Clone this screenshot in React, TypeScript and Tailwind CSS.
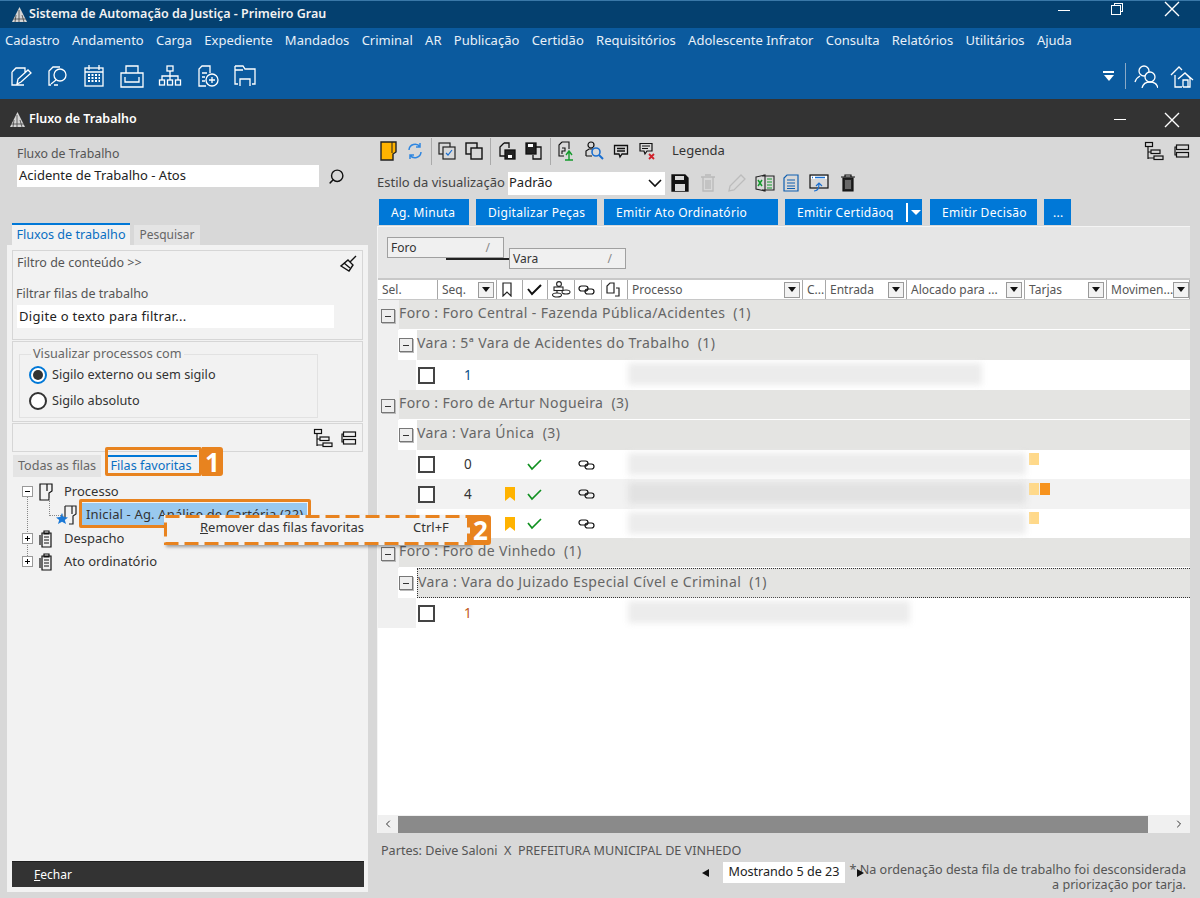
import React from 'react'
import { ChevronLeft, ChevronRight, Search } from 'lucide-react'

const FONT = "font-['Noto_Sans','Open_Sans',sans-serif]"

const menus = ['Cadastro', 'Andamento', 'Carga', 'Expediente', 'Mandados', 'Criminal', 'AR', 'Publicação', 'Certidão', 'Requisitórios', 'Adolescente Infrator', 'Consulta', 'Relatórios', 'Utilitários', 'Ajuda']

const Ico: React.FC<{ w?: number; h?: number; c?: string; sw?: number; children: React.ReactNode }> = ({ w = 24, h = 24, c = 'currentColor', sw = 1.3, children }) => (
  <svg width={w} height={h} viewBox={`0 0 ${w} ${h}`} fill="none" stroke={c} strokeWidth={sw} className="shrink-0">
    {children}
  </svg>
)

const Logo = () => (
  <svg width="17" height="17" viewBox="0 0 17 17" className="shrink-0">
    <path d="M8.5 1 L16 16 H1 Z" fill="#d5d5d5" />
    <path d="M8 4 L8 16 M5 9 L4 16 M11 9 L13 16 M2 13 H15" stroke="#444" strokeWidth="0.8" />
  </svg>
)

const CloseX = () => (
  <svg width="16" height="16" viewBox="0 0 16 16" className="shrink-0">
    <path d="M1 1 L15 15 M15 1 L1 15" stroke="#fff" strokeWidth="1.4" />
  </svg>
)

const TopIcons = () => (
  <div className="flex items-center text-white">
    <div className="ml-[8px] w-[24px]">
      <Ico><path d="M4 8 L8 4 H17 V9 M4 8 V21 H16 M9 20 L10 15 L20 6 L23 9 L13 18 Z" /></Ico>
    </div>
    <div className="ml-[14px] w-[24px]">
      <Ico><path d="M5 21 H3 V7 L7 3 H14 M12 21 H8" /><circle cx="14" cy="11" r="6" /><path d="M10 16 L5 20" /></Ico>
    </div>
    <div className="ml-[13px] w-[22px]">
      <Ico w={22}><rect x="2" y="4" width="18" height="18" /><path d="M6 1 V6 M16 1 V6 M2 8 H20" /><path d="M5 11 H17 M5 14 H17 M5 17 H17" strokeDasharray="2 1.5" strokeWidth="2" /></Ico>
    </div>
    <div className="ml-[14px] w-[26px]">
      <Ico w={26}><path d="M7 9 V2 H19 V9 M2 9 H24 V23 H2 Z M6 13 V18 H20 V13" /></Ico>
    </div>
    <div className="ml-[13px] w-[24px]">
      <Ico><rect x="9" y="2" width="6" height="5" /><path d="M12 7 V12 M4 16 V12 H20 V16 M12 12 V16" /><rect x="1.5" y="16" width="5" height="5" /><rect x="9.5" y="16" width="5" height="5" /><rect x="17.5" y="16" width="5" height="5" /></Ico>
    </div>
    <div className="ml-[14px] w-[24px]">
      <Ico><path d="M10 22 H3 V5 L6 2 H14 V9 M6 9 H11 M6 13 H9 M6 17 H9" /><circle cx="16" cy="16" r="6" /><path d="M16 13 V19 M13 16 H19" /></Ico>
    </div>
    <div className="ml-[13px] w-[24px]">
      <Ico><path d="M2 2 H10 L12 5 H22 V20 H19 M2 2 V20 H5 M2 6 H10 M7 22 V15 H17 V22" /></Ico>
    </div>
  </div>
)

const TreeIcon = () => (
  <Ico w={20} h={20} c="#111" sw={1.2}>
    <rect x="1.5" y="1.5" width="7" height="4" /><rect x="7" y="9" width="9" height="3.5" /><rect x="10" y="15" width="9" height="3.5" />
    <path d="M4 5.5 V18 M4 11 H7 M4 17 H10" />
  </Ico>
)
const ListIcon = () => (
  <Ico w={16} h={16} c="#111" sw={1.2}>
    <rect x="2.5" y="2" width="12" height="4.5" /><rect x="2.5" y="9.5" width="12" height="4.5" /><path d="M2.5 4 H1 V12 H2.5" />
  </Ico>
)

const Sep = () => <div className="w-px h-[27px] bg-[#aaaaaa]" />

const ActionToolbar = () => (
  <div className="h-[28px] flex items-center shrink-0">
    <svg width="17" height="20" viewBox="0 0 17 20" className="ml-[2px] shrink-0"><path d="M1 1 H16 V11 L13 13 V19 H1 Z" fill="#ffb300" stroke="#222" strokeWidth="1.4" /><path d="M12 1 V12" stroke="#222" /></svg>
    <div className="ml-[9px]"><Ico w={18} h={18} c="#2f86e0" sw={1.5}><path d="M3 8 A6 6 0 0 1 14 5 M15 10 A6 6 0 0 1 4 13 M14 1 V5 H10 M4 17 V13 H8" /></Ico></div>
    <div className="ml-[7px]"><Sep /></div>
    <div className="ml-[6px]"><Ico w={18} h={18} c="#222" sw={1.2}><rect x="1" y="1" width="11" height="11" /><rect x="5" y="5" width="12" height="12" fill="#d8d8d8" /><path d="M8 11 L10 13 L14 8" stroke="#1a6fd0" /></Ico></div>
    <div className="ml-[9px]"><Ico w={18} h={18} c="#111" sw={1.4}><rect x="1" y="1" width="11" height="11" /><rect x="6" y="6" width="11" height="11" fill="#d8d8d8" /></Ico></div>
    <div className="ml-[7px]"><Sep /></div>
    <div className="ml-[7px]"><Ico w={18} h={18} c="#111" sw={1.3}><path d="M6 1 H11 V6 M6 1 L2 5 V14 H7" /><rect x="7" y="8" width="10" height="9" fill="#222" /><rect x="10" y="13" width="4" height="3" fill="#fff" stroke="none" /></Ico></div>
    <div className="ml-[9px]"><Ico w={18} h={18} c="#111" sw={1.3}><path d="M11 5 H16 V17 H8 V13" /><rect x="1" y="1" width="10" height="11" fill="#222" /><rect x="3" y="2" width="5" height="3" fill="#fff" stroke="none" /></Ico></div>
    <div className="ml-[7px]"><Sep /></div>
    <div className="ml-[6px]"><Ico w={18} h={20} c="#111" sw={1.1}><path d="M5 1 H12 V8 M5 1 L2 4 V15 H7" /><path d="M5 7 H8 V10 H5 V13" /><path d="M12 19 V11 M9 14 L12 10 L15 14 M8 19 H16" stroke="#149a2c" strokeWidth="1.4" /></Ico></div>
    <div className="ml-[9px]"><Ico w={20} h={20} c="#111" sw={1.2}><circle cx="7" cy="4" r="3" /><path d="M2 15 V10 L5 8 H9 M2 15 H8" /><circle cx="12" cy="11" r="4" stroke="#1a6fd0" strokeWidth="1.6" /><path d="M15 14 L19 18" stroke="#1a6fd0" strokeWidth="2" /></Ico></div>
    <div className="ml-[9px]"><Ico w={16} h={16} c="#111" sw={1.3}><path d="M1.5 2.5 H14.5 V11 H9 L7 14 L6 11 H1.5 Z M4 5.5 H12 M4 8 H12" /></Ico></div>
    <div className="ml-[10px]"><Ico w={16} h={18} c="#111" sw={1.2}><path d="M1 1.5 H13 V9 H8 L6 12 L5 9 H1 Z M3 4 H11 M3 6.5 H9" /><path d="M10 12 L15 17 M15 12 L10 17" stroke="#d0202a" strokeWidth="1.8" /></Ico></div>
    <span className="ml-[17px] text-[13px] text-[#333]">Legenda</span>
    <div className="ml-auto flex items-center gap-[10px]"><TreeIcon /><ListIcon /></div>
  </div>
)

const StyleToolbar = () => (
  <div className="h-[26px] flex items-center mt-[5px] shrink-0 -ml-[1px]">
    <span className="text-[13px] text-[#444] w-[131px] whitespace-nowrap">Estilo da visualização</span>
    <div className="w-[157px] h-[23px] bg-white flex items-center justify-between px-[1px] text-[13px] text-[#222]">
      <span>Padrão</span>
      <Ico w={18} h={18} c="#111" sw={1.6}><path d="M3 6 L9 12 L15 6" /></Ico>
    </div>
    <div className="ml-[6px]"><Ico w={18} h={18} c="#111"><path d="M1 1 H14 L17 4 V17 H1 Z" fill="#111" /><rect x="4" y="2" width="9" height="4" fill="#d8d8d8" stroke="none" /><rect x="4" y="10" width="10" height="7" fill="#d8d8d8" stroke="none" /></Ico></div>
    <div className="ml-[10px]"><Ico w={18} h={18} c="#b9b9b9"><path d="M2 3 H16 M4 3 V17 H14 V3 M6 1 H12 M7 6 V15 M9 6 V15 M11 6 V15" /></Ico></div>
    <div className="ml-[10px]"><Ico w={20} h={20} c="#bcbcbc" sw={1.3}><path d="M2 18 L3 13 L14 2 L18 6 L7 17 Z" /></Ico></div>
    <div className="ml-[8px]"><Ico w={20} h={18} c="#222" sw={1.1}><path d="M7 2 H19 V16 H7 M1 3 L10 1 V17 L1 15 Z" /><path d="M3 6 L7 12 M7 6 L3 12" stroke="#149a2c" strokeWidth="1.5" /><path d="M12 5 H17 M12 8 H17 M12 11 H17 M12 14 H17" stroke="#149a2c" /></Ico></div>
    <div className="ml-[8px]"><Ico w={16} h={18} c="#0f5fb0" sw={1.2}><path d="M4 1 H15 V17 H1 V4 Z M4 6 H12 M4 9 H12 M4 12 H12 M4 14.5 H12" /></Ico></div>
    <div className="ml-[10px]"><Ico w={20} h={18} c="#111" sw={1.2}><rect x="1" y="1" width="18" height="13" /><rect x="2" y="2" width="16" height="3" stroke="none" fill="#fff" /><path d="M3 3.5 H4 M6 3.5 H16" stroke="#1a6fd0" strokeWidth="1.6" /><path d="M5 17 C8 17 10 15 10 10 M7 12 L10 9 L13 12" stroke="#1a6fd0" /></Ico></div>
    <div className="ml-[11px]"><Ico w={16} h={18} c="#111" sw={1.2}><path d="M1 3 H15 M5 3 V1 H11 V3" /><path d="M3 4 H13 V17 H3 Z" fill="#222" /><path d="M6 6 V15 M8 6 V15 M10 6 V15" stroke="#999" /></Ico></div>
  </div>
)

const Btn: React.FC<{ w: string; pad?: string; children: React.ReactNode }> = ({ w, pad = 'pl-[12px]', children }) => (
  <div className={`${w} ${pad} h-[26px] pt-[1px] bg-[#0078d7] text-white text-[12px] tracking-[0.3px] flex items-center whitespace-nowrap`}>{children}</div>
)

const ActionButtons = () => (
  <div className="flex gap-[7px] h-[26px] mt-[3px] ml-[1px] shrink-0">
    <Btn w="w-[90px]">Ag. Minuta</Btn>
    <Btn w="w-[121px]">Digitalizar Peças</Btn>
    <Btn w="w-[174px]">Emitir Ato Ordinatório</Btn>
    <div className="w-[137px] h-[26px] pt-[1px] bg-[#0078d7] text-white text-[12px] tracking-[0.3px] flex items-center">
      <span className="ml-[12px] w-[109px] whitespace-nowrap">Emitir Certidãoq</span>
      <div className="w-[2px] h-[19px] bg-white" />
      <div className="ml-[3px] w-0 h-0 border-x-[5px] border-x-transparent border-t-[5px] border-t-white" />
    </div>
    <div className="ml-[1px]"><Btn w="w-[107px]">Emitir Decisão</Btn></div>
    <Btn w="w-[27px]" pad="pl-[9px]">...</Btn>
  </div>
)

const DropBtn = () => (
  <div className="w-[16px] h-[16px] border border-[#9a9a9a] bg-[#f2f2f2] flex items-center justify-center shrink-0">
    <div className="w-0 h-0 border-x-[4px] border-x-transparent border-t-[5px] border-t-[#111]" />
  </div>
)

const HCell: React.FC<{ w: string; label?: string; drop?: boolean; icon?: React.ReactNode }> = ({ w, label, drop, icon }) => (
  <div className={`${w} h-full flex items-center justify-between ${icon ? 'pl-[3px]' : 'pl-[4px]'} pr-[2px] border-r border-[#a8a8a8] shrink-0 text-[12px] text-[#555] whitespace-nowrap overflow-hidden`}>
    {label && <span>{label}</span>}
    {icon}
    {drop && <DropBtn />}
  </div>
)

const LinkIcon = () => (
  <Ico w={18} h={12} c="#111" sw={1.2}>
    <rect x="1" y="2" width="9" height="5" rx="2.5" /><rect x="7" y="5" width="9" height="5" rx="2.5" />
  </Ico>
)

const HeaderRow = () => (
  <div className="h-[22px] bg-white border-t-[2px] border-b border-[#c8c8c8] flex items-center shrink-0">
    <HCell w="w-[60px]" label="Sel." />
    <HCell w="w-[59px]" label="Seq." drop />
    <HCell w="w-[26px]" icon={<Ico w={14} h={15} c="#222" sw={1.2}><path d="M3 1 H11 V14 L7 10 L3 14 Z" /></Ico>} />
    <HCell w="w-[25px]" icon={<Ico w={17} h={15} c="#111" sw={2}><path d="M2 7 L6 12 L15 3" /></Ico>} />
    <HCell w="w-[27px]" icon={<Ico w={20} h={17} c="#222" sw={1.1}><circle cx="8" cy="3" r="2.4" /><rect x="3" y="6" width="9" height="3.5" /><path d="M6 9.5 V12" /><ellipse cx="6" cy="14" rx="4.5" ry="2" /><ellipse cx="15" cy="11" rx="4" ry="2" /></Ico>} />
    <HCell w="w-[27px]" icon={<LinkIcon />} />
    <HCell w="w-[26px]" icon={<Ico w={16} h={16} c="#222" sw={1.2}><path d="M5 1 H9 V11 H2 V4 Z M11 6 H14 V14 H10" /></Ico>} />
    <HCell w="w-[175px]" label="Processo" drop />
    <HCell w="w-[23px]" label="C..." />
    <HCell w="w-[81px]" label="Entrada" drop />
    <HCell w="w-[118px]" label="Alocado para ..." drop />
    <HCell w="w-[82px]" label="Tarjas" drop />
    <HCell w="w-[83px]" label="Movimen..." drop />
  </div>
)

const Minus = () => (
  <div className="w-[14px] h-[14px] border border-[#777] bg-[#eeeeee] flex items-center justify-center shrink-0 shadow-[1px_1px_0_#bbb]">
    <div className="w-[6px] h-px bg-[#333]" />
  </div>
)

const Foro: React.FC<{ label: string; n: number }> = ({ label, n }) => (
  <div className="h-[30px] flex shrink-0">
    <div className="w-[21px] bg-[#f0f0f0] pt-[9px] pl-[3px]"><Minus /></div>
    <div className="flex-1 bg-[#e4e4e2] text-[14px] text-[#666] tracking-[0.38px] whitespace-pre pt-[2px] border-b border-white">{`${label}  (${n})`}</div>
  </div>
)

const Vara: React.FC<{ label: string; n: number; focus?: boolean }> = ({ label, n, focus }) => (
  <div className="h-[30px] flex shrink-0">
    <div className="w-[20px] bg-[#f0f0f0]" />
    <div className="w-[19px] bg-white pt-[8px] pl-[1px]"><Minus /></div>
    <div className={`flex-1 bg-[#e4e4e2] text-[14px] text-[#666] tracking-[0.42px] whitespace-pre pt-[2px] ${focus ? 'border-y border-l border-dotted border-[#333]' : ''}`}>{`${label}  (${n})`}</div>
  </div>
)

type RowProps = { seq?: number; seqColor?: string; mark?: boolean; done?: boolean; link?: boolean; blur: string; tarjas?: string[]; alt?: boolean; h?: string }

const Row: React.FC<RowProps> = ({ seq, seqColor = 'text-[#333]', mark, done, link, blur, tarjas = [], alt, h = 'h-[30px]' }) => (
  <div className={`${h} flex shrink-0`}>
    <div className="w-[38px] bg-[#f0f0f0] shrink-0" />
    <div className={`flex-1 flex items-center ${alt ? 'bg-[#f2f2f2]' : 'bg-white'}`}>
      <div className="w-[17px] h-[17px] border-[2px] border-[#444] bg-white ml-[2px] shrink-0" />
      <span className={`ml-[29px] w-[10px] text-[13.5px] shrink-0 ${seqColor}`}>{seq}</span>
      <div className="ml-[31px] w-[12px] shrink-0">
        {mark && <svg width="10" height="14" viewBox="0 0 10 14"><path d="M0 0 H10 V14 L5 10 L0 14 Z" fill="#ffb300" /></svg>}
      </div>
      <div className="ml-[9px] w-[18px] shrink-0">
        {done && <Ico w={17} h={13} c="#109020" sw={1.7}><path d="M2 6 L6 11 L15 2" /></Ico>}
      </div>
      <div className="ml-[34px] w-[18px] shrink-0">{link && <LinkIcon />}</div>
      <div className="ml-[32px] w-[398px] h-[24px] shrink-0">
        <div className={`${blur} h-[22px] ${alt ? 'bg-[#e2e2e2]' : 'bg-[#ececec]'} blur-[3px]`} />
      </div>
      <div className="ml-[3px] flex gap-[1px] -mt-[11px]">
        {tarjas.map((t, i) => (
          <div key={i} className={`w-[10px] h-[12px] ${t}`} />
        ))}
      </div>
    </div>
  </div>
)

const Grid = () => (
  <div className="flex-1 min-h-0 flex flex-col bg-white border-t border-l border-[#f4f4f4] w-[813px] ml-[-1px] mt-[1px]">
    <div className="h-[51px] bg-[#e6e6e6] flex relative shrink-0">
      <div className="ml-[9px] mt-[10px] w-[117px] h-[21px] border border-[#a0a0a0] bg-[#f0f0f0] text-[12px] text-[#333] flex items-center justify-between px-[3px] z-10">
        <span>Foro</span><span className="text-[#888] mr-[10px]">/</span>
      </div>
      <div className="absolute left-[68px] top-[31px] w-[64px] h-[2px] bg-[#222]" />
      <div className="ml-[5px] mt-[21px] w-[117px] h-[21px] border border-[#a0a0a0] bg-[#f0f0f0] text-[12px] text-[#333] flex items-center justify-between px-[3px] z-10">
        <span>Vara</span><span className="text-[#888] mr-[10px]">/</span>
      </div>
    </div>
    <HeaderRow />
    <Foro label="Foro : Foro Central - Fazenda Pública/Acidentes" n={1} />
    <Vara label="Vara : 5ª Vara de Acidentes do Trabalho" n={1} />
    <Row seq={1} seqColor="text-[#0b4f8a]" blur="w-[354px]" />
    <Foro label="Foro : Foro de Artur Nogueira" n={3} />
    <Vara label="Vara : Vara Única" n={3} />
    <Row seq={0} h="h-[29px]" done link blur="w-[398px]" tarjas={['bg-[#ffd98a]']} />
    <Row seq={4} mark done link alt blur="w-[398px]" tarjas={['bg-[#ffd98a]', 'bg-[#f7931e]']} />
    <Row h="h-[29px]" mark done link blur="w-[398px]" tarjas={['bg-[#ffd98a]']} />
    <Foro label="Foro : Foro de Vinhedo" n={1} />
    <Vara focus label="Vara : Vara do Juizado Especial Cível e Criminal" n={1} />
    <Row seq={1} seqColor="text-[#c2571a]" blur="w-[282px]" />
    <div className="flex-1" />
    <div className="h-[18px] bg-[#f0f0f0] flex items-center shrink-0">
      <ChevronLeft size={12} className="w-[20px] text-[#333]" />
      <div className="w-[750px] h-[17px] bg-[#8a8a8a]" />
      <div className="flex-1" />
      <ChevronRight size={12} className="w-[22px] text-[#333]" />
    </div>
  </div>
)

const TreeRow: React.FC<{ kind: 'plus' | 'minus'; icon: 'page' | 'doc'; label: string }> = ({ kind, icon, label }) => (
  <div className="h-[23px] flex items-center">
    <div className="w-[11px] h-[11px] border border-[#999] bg-white relative shrink-0 z-10">
      <div className="absolute left-[2px] top-[4px] w-[5px] h-px bg-black" />
      {kind === 'plus' && <div className="absolute left-[4px] top-[2px] w-px h-[5px] bg-black" />}
    </div>
    <div className="ml-[5px] w-[20px] shrink-0">
      {icon === 'page' ? (
        <Ico w={16} h={18} c="#111" sw={1.2}><path d="M2 1 H14 V8 L11 10 V17 H2 Z M9 1 V8" /></Ico>
      ) : (
        <Ico w={16} h={18} c="#111" sw={1.2}><path d="M4 3 H13 V17 H4 Z M2 5 V15 M6 1 H11 V4 H6 Z M6 7 H11 M6 10 H11 M6 13 H11" /></Ico>
      )}
    </div>
    <span className="ml-[6px]">{label}</span>
  </div>
)

const LeftPanel = () => (
  <div className="w-[377px] shrink-0 flex flex-col pl-[7px]">
    <div className="ml-[10px] mt-[9px] text-[12.3px] text-[#555] leading-[16px]">Fluxo de Trabalho</div>
    <div className="ml-[10px] mt-[3px] flex items-center">
      <div className="w-[302px] h-[22px] bg-white text-[13px] text-[#222] flex items-center pl-[2px]">Acidente de Trabalho - Atos</div>
      <Search size={17} className="ml-[9px] text-[#111] -scale-x-100" />
    </div>
    <div className="flex ml-[5px] mt-[36px] h-[22px] items-end">
      <div className="w-[118px] h-[22px] bg-[#f2f2f2] border-t-[2px] border-[#0078d7] text-[12.6px] text-[#0a6fc2] flex items-center justify-center">Fluxos de trabalho</div>
      <div className="ml-[4px] w-[66px] h-[20px] bg-[#e4e4e4] text-[12px] text-[#666] flex items-center justify-center">Pesquisar</div>
    </div>
    <div className="w-[361px] flex-1 min-h-0 bg-[#f2f2f2] flex flex-col px-[5px] pt-[5px]">
      <div className="h-[90px] border border-[#d6d6d6] pl-[4px] shrink-0 text-[12.5px] text-[#555]">
        <div className="mt-[3px] flex justify-between pr-[4px] items-start">
          <span>Filtro de conteúdo &gt;&gt;</span>
          <Ico w={20} h={20} c="#111" sw={1.4}><path d="M18 2 L12 8 M10 6 L15 11 L11 17 L3 12 Z" /><path d="M6 9 L12 14" /></Ico>
        </div>
        <div className="mt-[11px] -ml-[1px]">Filtrar filas de trabalho</div>
        <div className="mt-[1px] w-[317px] h-[23px] bg-white text-[13px] tracking-[0.3px] text-[#222] flex items-center pl-[2px]">Digite o texto para filtrar...</div>
      </div>
      <div className="h-[81px] mt-[1px] border border-[#d6d6d6] pl-[6px] pt-[12px] shrink-0 relative">
        <div className="absolute left-[18px] top-[3px] bg-[#f2f2f2] px-[2px] text-[12.7px] text-[#666] leading-[16px]">Visualizar processos com</div>
        <div className="w-[299px] h-[64px] border border-[#e2e2e2] flex flex-col pl-[9px] text-[12.7px] text-[#333]">
          <div className="flex items-center mt-[10px] gap-[5px]">
            <div className="w-[18px] h-[18px] rounded-full border-[2px] border-[#0078d7] bg-white flex items-center justify-center">
              <div className="w-[10px] h-[10px] rounded-full bg-[#333]" />
            </div>
            <span>Sigilo externo ou sem sigilo</span>
          </div>
          <div className="flex items-center mt-[7px] gap-[5px]">
            <div className="w-[18px] h-[18px] rounded-full border-[2px] border-[#333] bg-white" />
            <span>Sigilo absoluto</span>
          </div>
        </div>
      </div>
      <div className="h-[29px] mt-[1px] border border-[#d6d6d6] flex items-center justify-end gap-[8px] pr-[5px] shrink-0">
        <TreeIcon /><ListIcon />
      </div>
      <div className="flex h-[27px] ml-[1px] items-end mt-[1px] shrink-0">
        <div className="w-[88px] h-[22px] bg-[#e4e4e4] text-[12.6px] text-[#666] flex items-center justify-center mb-[3px]">Todas as filas</div>
        <div className="ml-[4px] w-[92px] h-[25px] border-t-[2px] pb-[5px] border-[#0078d7] text-[12.6px] text-[#0a6fc2] flex items-center justify-center">Filas favoritas</div>
      </div>
      <div className="text-[13px] text-[#333] flex flex-col shrink-0 pl-[10px] relative">
        <div className="absolute left-[15px] top-[16px] h-[62px] border-l border-dotted border-[#888]" />
        <div className="absolute left-[37px] top-[18px] h-[18px] border-l border-dotted border-[#888]" />
        <div className="absolute left-[37px] top-[35px] w-[14px] border-t border-dotted border-[#888]" />
        <TreeRow kind="minus" icon="page" label="Processo" />
        <div className="h-[24px] flex items-center pl-[38px]">
          <svg width="22" height="22" viewBox="0 0 22 22" className="shrink-0 -ml-[4px]">
            <path d="M9 2 H20 V10 L17 12 V20 H13 M9 2 V14 M16 2 V10" fill="none" stroke="#222" strokeWidth="1.2" />
            <path d="M6 9 L7.8 13 L12 13.4 L8.8 16 L10 20 L6 17.8 L2 20 L3.2 16 L0 13.4 L4.2 13 Z" fill="#1a78d6" />
          </svg>
          <div className="ml-[4px] h-[24px] w-[225px] bg-[#99c9ef] flex items-center pl-[4px] tracking-[0.15px] whitespace-nowrap overflow-hidden">Inicial - Ag. Análise de Cartória (22)</div>
        </div>
        <TreeRow kind="plus" icon="doc" label="Despacho" />
        <TreeRow kind="plus" icon="doc" label="Ato ordinatório" />
      </div>
      <div className="flex-1" />
    </div>
    <div className="w-[361px] h-[34px] bg-[#f2f2f2] px-[5px] pt-[3px] shrink-0 mb-[6px]">
      <div className="w-[352px] h-[26px] bg-[#333333] border-t border-[#1f1f1f] text-[12px] text-white flex items-center pl-[22px]">
        <span><span className="underline">F</span>echar</span>
      </div>
    </div>
  </div>
)

const Badge: React.FC<{ n: number; className: string }> = ({ n, className }) => (
  <div className={`absolute bg-[#e8831f] text-white font-bold text-[26px] leading-none flex items-center justify-center rounded-r-[3px] ${className}`}>{n}</div>
)

const Annotations = () => (
  <>
    <div className="absolute left-[105px] top-[447px] w-[97px] h-[29px] border-[3px] border-[#e8831f] rounded-[2px]" />
    <Badge n={1} className="left-[202px] top-[447px] w-[21px] h-[29px]" />
    <div className="absolute left-[79px] top-[499px] w-[232px] h-[29px] border-[3px] border-[#e8831f] rounded-[2px]" />
    <div className="absolute left-[164px] top-[515px] w-[306px] h-[30px] bg-[#f2f2f2] shadow-[2px_2px_3px_rgba(0,0,0,0.35)] flex items-center pb-[5px] text-[13px] text-[#333] whitespace-nowrap">
      <svg width="306" height="30" className="absolute left-0 top-0">
        <rect x="1.5" y="1.5" width="303" height="27" fill="none" stroke="#e8831f" strokeWidth="3" strokeDasharray="14 6" />
      </svg>
      <span className="ml-[36px]"><span className="underline">R</span>emover das filas favoritas</span>
      <span className="ml-[49px]">Ctrl+F</span>
    </div>
    <Badge n={2} className="left-[470px] top-[515px] w-[21px] h-[30px]" />
  </>
)

export default function App() {
  return (
    <div className={`${FONT} w-[1200px] h-[898px] relative overflow-hidden flex flex-col bg-[#d8d8d8]`}>
      <div className="h-[28px] bg-[#04406f] border-t border-[#3a78a8] flex items-center pl-[11px] text-white shrink-0">
        <Logo />
        <span className="ml-[1px] text-[12.5px] font-semibold text-[#f2f2f2]">Sistema de Automação da Justiça - Primeiro Grau</span>
        <div className="ml-auto w-[12px] h-px bg-white mr-[41px] -mt-[8px]" />
        <div className="relative w-[12px] h-[12px] mr-[41px] -mt-[11px]">
          <div className="absolute left-[3px] top-0 w-[9px] h-[9px] border border-white" />
          <div className="absolute left-0 top-[2px] w-[10px] h-[10px] border border-white bg-[#04406f]" />
        </div>
        <div className="mr-[20px] -mt-[11px]"><CloseX /></div>
      </div>
      <div className="h-[71px] bg-[#0b5a9e] shrink-0 flex flex-col">
        <div className="h-[25px] flex items-center pl-[5px] gap-[12.3px] text-[13px] text-[#e8f0f8] whitespace-nowrap">
          {menus.map(m => (
            <span key={m}>{m}</span>
          ))}
        </div>
        <div className="flex-1 flex items-center justify-between">
          <TopIcons />
          <div className="flex items-center text-white mr-[6px]">
            <div className="flex flex-col items-center mr-[11px]">
              <div className="w-[11px] h-[2px] bg-white mb-[2px]" />
              <div className="w-0 h-0 border-x-[5px] border-x-transparent border-t-[6px] border-t-white" />
            </div>
            <div className="w-px h-[26px] bg-[#8aa9c6] mr-[8px]" />
            <Ico><circle cx="10" cy="7" r="5" /><path d="M1 18 C2 14 4 13 6 12" /><circle cx="16" cy="13" r="5" fill="#0b5a9e" /><path d="M8 24 C9 20 12 18 16 18 C20 18 23 20 24 24" /></Ico>
            <div className="ml-[12px]"><Ico><path d="M1 11 L9 3 L12 6 M12 23 H5 V11 M13 23 V16 H18 V23 M13 23 H20 V14 L15 9 L8 15 M15 9 L23 16" /></Ico></div>
          </div>
        </div>
      </div>
      <div className="h-[38px] bg-[#333333] shrink-0 flex items-center pl-[9px] pt-[3px] text-white">
        <Logo />
        <span className="ml-[3px] text-[12.5px] font-semibold">Fluxo de Trabalho</span>
        <div className="ml-auto w-[12px] h-px bg-white mr-[38px]" />
        <div className="mr-[20px]"><CloseX /></div>
      </div>
      <div className="flex-1 min-h-0 flex">
        <LeftPanel />
        <div className="w-[813px] flex flex-col pl-[1px]">
          <ActionToolbar />
          <StyleToolbar />
          <ActionButtons />
          <Grid />
          <div className="h-[65px] shrink-0 text-[12.6px] text-[#555]">
            <div className="pl-[3px] pt-[10px] leading-[16px] whitespace-pre">Partes: Deive Saloni  X  PREFEITURA MUNICIPAL DE VINHEDO</div>
            <div className="flex justify-end items-start mt-[3px] pr-[4px]">
              <div className="w-0 h-0 mt-[7px] border-y-[4px] border-y-transparent border-r-[7px] border-r-[#111]" />
              <div className="ml-[14px] w-[122px] h-[21px] bg-white text-[#222] flex items-center justify-center whitespace-nowrap">Mostrando 5 de 23</div>
              <div className="relative w-[341px] text-right leading-[15px]">
                <div className="absolute left-[12px] top-[7px] w-0 h-0 border-y-[4px] border-y-transparent border-l-[7px] border-l-[#111]" />
                * Na ordenação desta fila de trabalho foi desconsiderada<br />a priorização por tarja.
              </div>
            </div>
          </div>
        </div>
      </div>
      <Annotations />
    </div>
  )
}
